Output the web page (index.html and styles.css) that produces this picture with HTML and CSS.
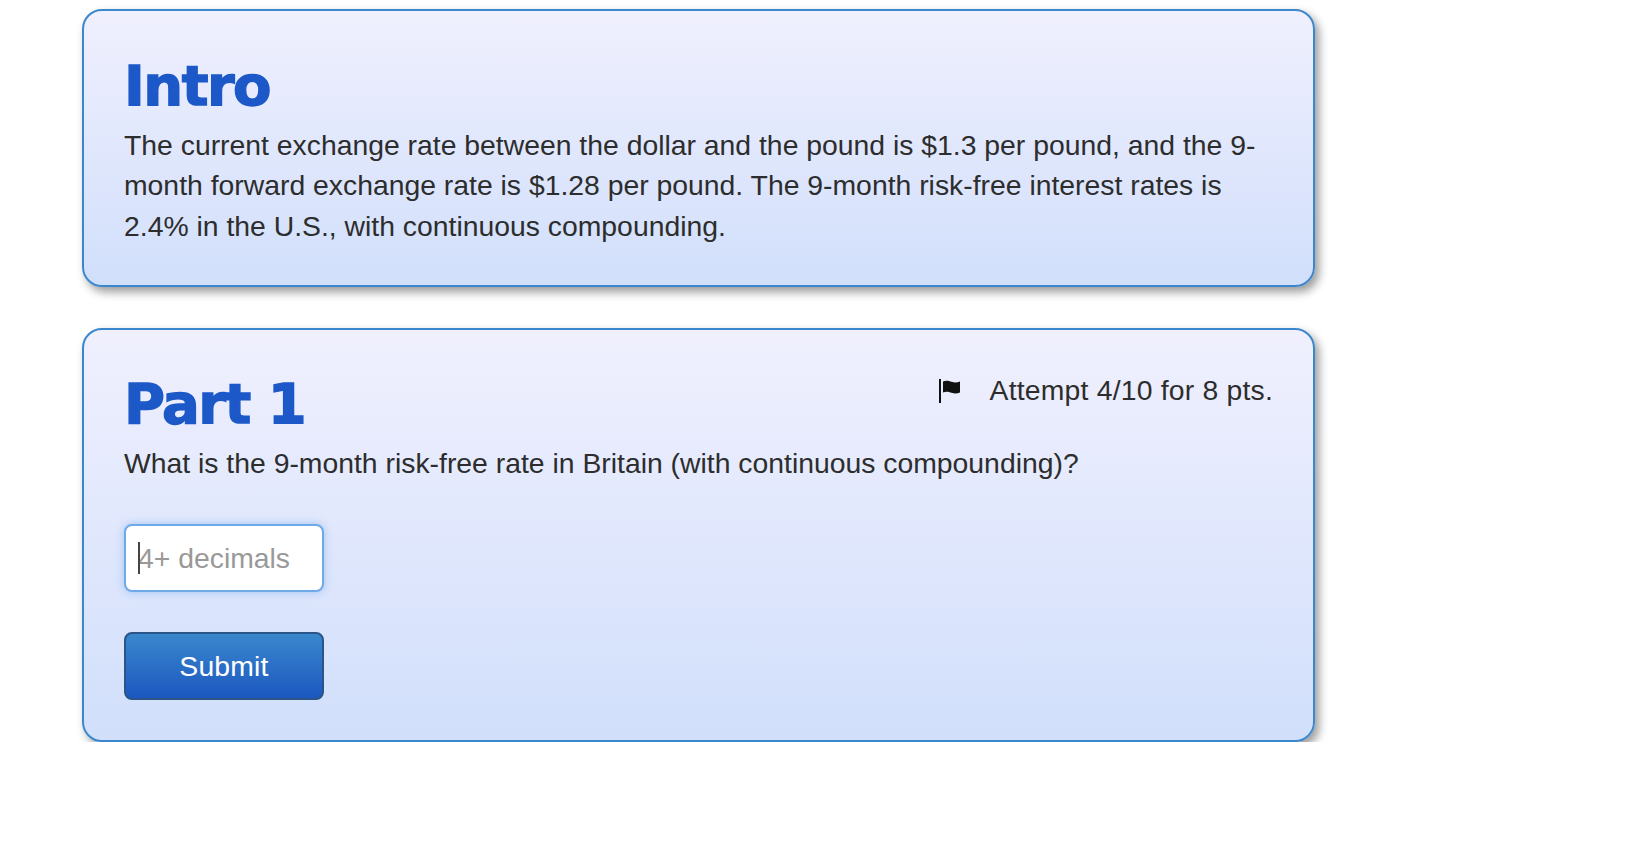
FILE: index.html
```html
<!DOCTYPE html>
<html lang="en">
<head>
    <meta charset="UTF-8">
    <title>Part 1</title>
    <link rel="stylesheet" href="styles.css">
</head>
<body>
    <div class="card intro">
        <h2>Intro</h2>
        <p>The current exchange rate between the dollar and the pound is $1.3 per pound, and the 9-month forward exchange rate is $1.28 per pound. The 9-month risk-free interest rates is 2.4% in the U.S., with continuous compounding.</p>
    </div>
    <div class="card part">
        <div class="part-head">
            <h2>Part 1</h2>
            <div class="attempts">
                <svg class="flag" width="22" height="24" viewBox="0 0 22 24">
                    <rect x="0" y="0" width="2" height="24" fill="#111"/>
                    <path d="M4 2.500c3-1.600 6-.6 8.500.3 3 1 5.500 1 8.500-.3v11c-3 1.300-5.500 1.300-8.500.3-2.500-.9-5.500-1.900-8.500-.3z" fill="#111"/>
                </svg>
                <span>Attempt 4/10 for 8 pts.</span>
            </div>
        </div>
        <p>What is the 9-month risk-free rate in Britain (with continuous compounding)?</p>
        <div class="field">
            <input type="text" placeholder="4+ decimals">
            <span class="caret"></span>
        </div>
        <button>Submit</button>
    </div>
</body>
</html>
```

FILE: styles.css
```css
body {
    font-family: 'Liberation Sans', Arial, sans-serif;
    font-size: 28.350px;
    color: #2d2d2d;
    background-color: #fff;
    margin: 0;
    padding: 9px 0 0 82px;
}

.card {
    box-sizing: border-box;
    width: 1233px;
    border: 2px solid #3a87cd;
    border-radius: 20px;
    padding: 45px 40px;
    background: linear-gradient(#f0f0fe, #d1dffb);
    box-shadow: 4px 5px 10px rgba(0, 0, 0, 0.4);
}

.intro {
    height: 278px;
    margin-bottom: 41px;
}

.part {
    height: 414px;
    padding-top: 44px;
}

h2 {
    font-family: 'DejaVu Sans', sans-serif;
    font-weight: bold;
    font-size: 56px;
    line-height: 60px;
    letter-spacing: -1.500px;
    color: #1c58c8;
    -webkit-text-stroke: 1.400px #1c58c8;
    margin: 0 0 9px;
}

.part h2 {
    margin-bottom: 8px;
}

p {
    line-height: 40.400px;
    margin: 0;
}

.part-head {
    display: flex;
    justify-content: space-between;
    align-items: flex-start;
    margin-bottom: 1px;
}

.attempts {
    display: flex;
    align-items: center;
    gap: 29px;
    letter-spacing: 0.2px;
}

.field {
    position: relative;
    width: 200px;
    margin-top: 41px;
}

input {
    box-sizing: border-box;
    width: 200px;
    height: 68px;
    border: 2px solid #6eaae6;
    border-radius: 8px;
    padding: 0 12px;
    background-color: #fff;
    font-family: inherit;
    font-size: 28.350px;
    box-shadow: 0 0 9px rgba(82, 150, 230, 0.45);
}

input::placeholder {
    color: #999;
    opacity: 1;
}

.caret {
    position: absolute;
    left: 14px;
    top: 18px;
    width: 2px;
    height: 32px;
    background-color: #444;
}

button {
    display: block;
    box-sizing: border-box;
    width: 200px;
    height: 68px;
    margin-top: 40px;
    border: 2px solid #2b5487;
    border-radius: 8px;
    background: linear-gradient(#3a87cd, #1c58c0);
    color: #fff;
    font-family: inherit;
    font-size: 28.350px;
    letter-spacing: 0.2px;
}
```
